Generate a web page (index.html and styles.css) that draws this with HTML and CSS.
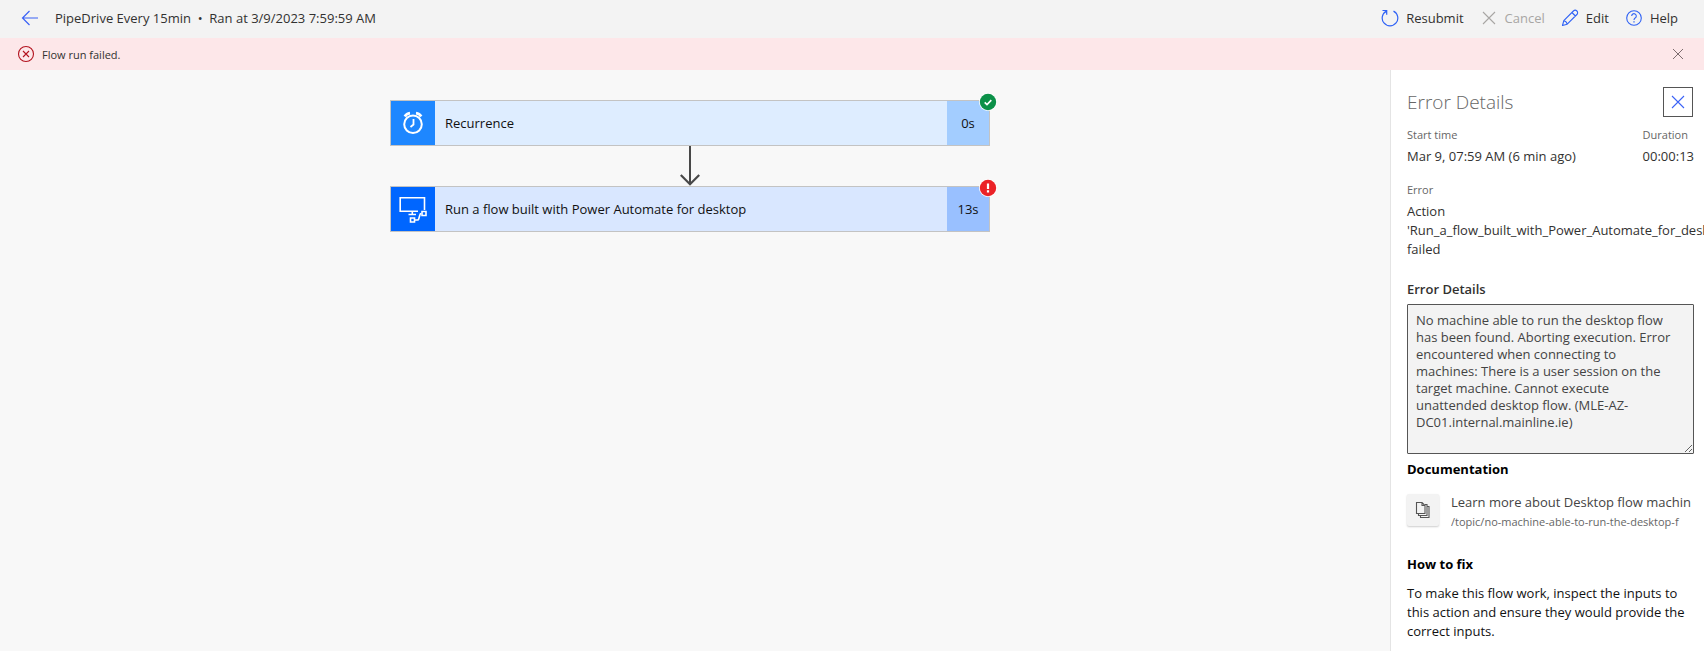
FILE: index.html
```html
<!DOCTYPE html>
<html lang="en">
<head>
<meta charset="utf-8">
<meta name="viewport" content="width=device-width, initial-scale=1">
<title>PipeDrive Every 15min</title>
<link rel="stylesheet" href="styles.css">
</head>
<body>
<header class="topbar">
  <button class="icon-button back" type="button" aria-label="Back">
    <svg width="18" height="16" viewBox="0 0 18 16" fill="none" stroke="currentColor" stroke-width="1.2"><path d="M8.500 1 1.500 8l7 7M1.500 8H17"/></svg>
  </button>
  <h1 class="run-title">PipeDrive Every 15min&nbsp; •&nbsp; Ran at 3/9/2023 7:59:59 AM</h1>
  <nav class="commands" aria-label="Run commands">
    <button class="command" type="button">
      <svg width="18" height="18" viewBox="0 0 18 18" fill="none" stroke="currentColor" stroke-width="1.200"><path d="M12.500 2.100A7.800 7.800 0 1 1 5.500 2.100M1.500 1.500h4.200v4.200"/></svg>
      Resubmit
    </button>
    <button class="command" type="button" disabled>
      <svg width="18" height="18" viewBox="0 0 18 18" fill="none" stroke="currentColor" stroke-width="1.1"><path d="m3 3 12 12M15 3 3 15"/></svg>
      Cancel
    </button>
    <button class="command" type="button">
      <svg width="18" height="18" viewBox="0 0 18 18" fill="none" stroke="currentColor" stroke-width="1.1" stroke-linejoin="round"><path d="m1.5 16.5 1.3-4.8L12.4 2a2.4 2.4 0 0 1 3.5 3.5L6.2 15.2zM10.9 3.5l3.5 3.5M2.8 11.7q2.8.6 3.4 3.5"/></svg>
      Edit
    </button>
    <button class="command" type="button">
      <svg width="18" height="18" viewBox="0 0 18 18" fill="none" stroke="currentColor" stroke-width="1.1"><circle cx="9" cy="9" r="7.3"/><path d="M6.7 7a2.3 2.3 0 1 1 3.7 1.800C9.400 9.500 9 9.900 9 11"/><path d="M9 12.200v1.300" stroke-width="1.300"/></svg>
      Help
    </button>
  </nav>
</header>

<div class="alert" role="alert">
  <svg width="18" height="18" viewBox="0 0 18 18" fill="none" stroke="#b3131f" stroke-width="1.1"><circle cx="9" cy="9" r="7.5"/><path d="m6 6 6 6M12 6l-6 6"/></svg>
  <span class="alert-text">Flow run failed.</span>
  <button class="icon-button dismiss" type="button" aria-label="Dismiss">
    <svg width="12" height="12" viewBox="0 0 12 12" fill="none" stroke="currentColor"><path d="m1 1 10 10M11 1 1 11"/></svg>
  </button>
</div>

<div class="workspace">
  <main class="canvas">
    <button class="step step-recurrence" type="button">
      <span class="step-icon">
        <svg width="44" height="44" viewBox="0 0 44 44" fill="none" stroke="#fff"><circle cx="22" cy="23.300" r="8.800" stroke-width="2"/><path d="M22.500 18v5.500L19.500 26" stroke-width="1.800"/><path d="M13.800 15.400q1.700-2.800 5.200-3.300M30.200 15.400q-1.700-2.800-5.200-3.300" stroke-width="2.800"/></svg>
      </span>
      <span class="step-name">Recurrence</span>
      <span class="step-time">0s</span>
      <svg class="badge" width="18" height="18" viewBox="0 0 18 18" role="img" aria-label="Succeeded"><circle cx="9" cy="9" r="9" fill="#fff"/><circle cx="9" cy="9" r="8.200" fill="#0b9048"/><path d="m5.700 9.300 2.300 2.200 4.300-4.300" fill="none" stroke="#fff" stroke-width="1.700"/></svg>
    </button>
    <svg class="arrow" width="20" height="40" viewBox="0 0 20 40" fill="none" stroke="#484848" stroke-width="2"><path d="M10 0v38"/><path d="M.8 29l9.200 9.300 9.200-9.300" stroke-width="2.200"/></svg>
    <button class="step step-desktop" type="button">
      <span class="step-icon">
        <svg width="44" height="44" viewBox="0 0 44 44" fill="none" stroke="#fff" stroke-width="1.600"><path d="M27 24.300H9.200V10.700h24.300V23M21.300 24.300V27M17.500 27.500h7.500"/><path d="M24 33h2.500q1 0 1.200-1l1.300-4.500q.2-1 1.200-1"/><path d="M19.500 31h4v4h-4zM31 24.500h4v4h-4z"/></svg>
      </span>
      <span class="step-name">Run a flow built with Power Automate for desktop</span>
      <span class="step-time">13s</span>
      <svg class="badge" width="18" height="18" viewBox="0 0 18 18" role="img" aria-label="Failed"><circle cx="9" cy="9" r="9" fill="#fff"/><circle cx="9" cy="9" r="8.200" fill="#eb2227"/><path d="M9 4.500V10M9 11.300v2.200" stroke="#fff" stroke-width="2.200"/></svg>
    </button>
  </main>

  <aside class="panel" aria-labelledby="panel-title">
    <div class="panel-head">
      <h2 class="panel-title" id="panel-title">Error Details</h2>
      <button class="close" type="button" aria-label="Close">
        <svg width="14" height="14" viewBox="0 0 14 14" fill="none" stroke="currentColor" stroke-width="1.100"><path d="m1 1 12 12M13 1 1 13"/></svg>
      </button>
    </div>
    <dl class="facts">
      <div>
        <dt>Start time</dt>
        <dd>Mar 9, 07:59 AM (6 min ago)</dd>
      </div>
      <div>
        <dt>Duration</dt>
        <dd>00:00:13</dd>
      </div>
    </dl>
    <dl class="facts">
      <div>
        <dt>Error</dt>
        <dd>Action 'Run_a_flow_built_with_Power_Automate_for_desktop' failed</dd>
      </div>
    </dl>
    <label class="details-label" for="details">Error Details</label>
    <textarea class="details" id="details" readonly>No machine able to run the desktop flow has been found. Aborting execution. Error encountered when connecting to machines: There is a user session on the target machine. Cannot execute unattended desktop flow. (MLE-AZ-DC01.internal.mainline.ie)</textarea>
    <h3 class="section-title">Documentation</h3>
    <a class="doc" href="#documentation">
      <span class="doc-icon">
        <svg width="16" height="16" viewBox="0 0 16 16" fill="none" stroke="#555" stroke-width="1.100"><path d="M1.500.5h5.500l3 3v8h-8.500zM7 .5v3h3M10 2.500h2v11H3.500v-2M12 4.500h2v11H5.500v-2"/></svg>
      </span>
      <span class="doc-text">
        <span class="doc-name">Learn more about Desktop flow machin</span>
        <span class="doc-path">/topic/no-machine-able-to-run-the-desktop-f</span>
      </span>
    </a>
    <h3 class="section-title">How to fix</h3>
    <p class="fix">To make this flow work, inspect the inputs to this action and ensure they would provide the correct inputs.</p>
  </aside>
</div>
</body>
</html>
```
FILE: styles.css
```css
* {
  box-sizing: border-box;
}

body {
  display: flex;
  flex-direction: column;
  min-height: 100vh;
  margin: 0;
  overflow-x: hidden;
  background: #f8f8f8;
  color: #323130;
  font: 13px/19px "Segoe UI", "Open Sans", "Noto Sans", sans-serif;
}

h1, h2, h3, p, dl, dd {
  margin: 0;
}

button, textarea {
  color: inherit;
  font: inherit;
}

button {
  padding: 0;
  border: 0;
  background: none;
}

svg {
  display: block;
  flex: none;
}

.topbar {
  display: flex;
  align-items: center;
  height: 38px;
  padding: 0 26px 2px 21px;
  background: #f3f3f3;
}

.icon-button {
  display: flex;
}

.back {
  color: #3b62f6;
}

.run-title {
  margin-left: 16px;
  font-size: 13px;
  font-weight: 400;
}

.commands {
  display: flex;
  gap: 16px;
  margin-left: auto;
}

.command {
  display: flex;
  align-items: center;
  gap: 7px;
}

.command svg {
  color: #2f62f5;
}

.command:disabled,
.command:disabled svg {
  color: #a8a6a4;
}

.alert {
  display: flex;
  align-items: center;
  gap: 7px;
  height: 32px;
  padding: 0 20px 0 17px;
  background: #fde7e9;
  font-size: 11px;
}

.dismiss {
  margin-left: auto;
  color: #7d6c6e;
}

.workspace {
  display: flex;
  flex: 1;
}

.canvas {
  display: flex;
  flex: 1;
  flex-direction: column;
  align-items: center;
  padding: 30px 10px 30px 0;
}

.step {
  position: relative;
  display: flex;
  width: 600px;
  height: 46px;
  border: 1px solid #c3c3c3;
  color: #111;
  text-align: left;
}

.step-recurrence {
  background: #deedff;
}

.step-desktop {
  background: #d9e7ff;
}

.step-icon,
.step-time {
  display: flex;
  align-items: center;
  justify-content: center;
  height: 100%;
}

.step-icon {
  width: 44px;
}

.step-name {
  flex: 1;
  align-self: center;
  padding-left: 10px;
}

.step-time {
  width: 42px;
}

.step-recurrence .step-icon {
  background: #1e87ff;
}

.step-recurrence .step-time {
  background: #a3cdff;
}

.step-desktop .step-icon {
  background: #0066ff;
}

.step-desktop .step-time {
  background: #99c0ff;
}

.badge {
  position: absolute;
  top: -8px;
  right: -8px;
}

.panel {
  width: 314px;
  padding: 17px 10px 10px 16px;
  border-left: 1px solid #e4e4e4;
  background: #fff;
}

.panel-head {
  display: flex;
  align-items: center;
  justify-content: space-between;
  padding-right: 1px;
}

.panel-title {
  color: #666;
  font-size: 19px;
  font-weight: 300;
  line-height: 28px;
}

.close {
  display: flex;
  align-items: center;
  justify-content: center;
  width: 30px;
  height: 30px;
  border: 1px solid #555;
  color: #3b62f6;
}

.facts {
  display: flex;
  justify-content: space-between;
  margin-top: 8px;
}

.facts + .facts {
  margin-top: 14px;
}

.facts dt {
  color: #666;
  font-size: 11px;
  line-height: 20px;
}

.facts dd {
  padding-top: 2px;
}

.details-label {
  display: block;
  margin-top: 21px;
  font-weight: 600;
}

.details {
  display: block;
  width: 100%;
  height: 150px;
  margin-top: 5px;
  padding: 7px 16px 7px 8px;
  border: 1px solid #555;
  border-radius: 1px;
  outline: 0;
  background: #f3f3f3;
  color: #444;
  line-height: 17px;
}

.section-title {
  margin-top: 6px;
  color: #000;
  font-size: 13px;
  font-weight: 700;
  line-height: 19px;
}

.doc {
  display: flex;
  gap: 12px;
  margin: 13px 0 23px;
  color: #444;
  text-decoration: none;
}

.doc-icon {
  display: flex;
  flex: none;
  align-items: center;
  justify-content: center;
  width: 32px;
  height: 32px;
  margin-top: 2px;
  border-radius: 2px;
  background: #f3f3f3;
  box-shadow: 0 1px 2px #0003;
}

.doc-text {
  min-width: 0;
}

.doc-name,
.doc-path {
  display: block;
  overflow: hidden;
  line-height: 20px;
  white-space: nowrap;
}

.doc-path {
  color: #666;
  font-size: 11px;
}

.fix {
  margin-top: 10px;
  color: #111;
}
```
